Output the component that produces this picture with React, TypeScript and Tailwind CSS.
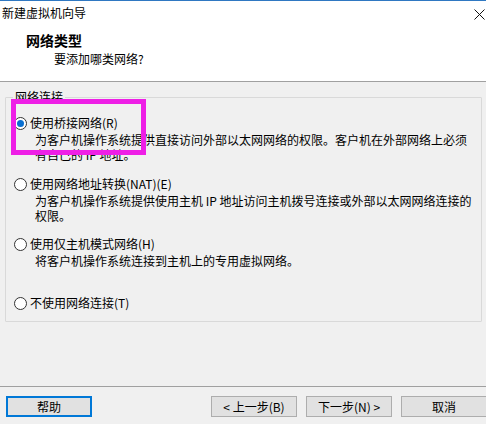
import React from "react";

const font = { fontFamily: '"Noto Sans CJK SC", "Noto Sans", sans-serif' };

function Radio({ checked }: { checked?: boolean }) {
  return (
    <span className="flex h-[13px] w-[13px] shrink-0 items-center justify-center rounded-full border border-[#333333] bg-white">
      {checked && <span className="h-[7px] w-[7px] rounded-full bg-[#0a6fd0]" />}
    </span>
  );
}

function Option({
  label,
  lines,
  checked,
  className,
}: {
  label: string;
  lines?: string[];
  checked?: boolean;
  className?: string;
}) {
  return (
    <div className={className}>
      <div className="flex h-[16px] items-center gap-[3px]">
        <Radio checked={checked} />
        <span className="leading-[16px]">{label}</span>
      </div>
      {lines && (
        <div className="mt-[1px] pl-[21px] leading-[15px]">
          {lines.map((l) => (
            <div key={l} className="h-[15px] whitespace-nowrap">
              {l}
            </div>
          ))}
        </div>
      )}
    </div>
  );
}

function Btn({ children, focused }: { children: React.ReactNode; focused?: boolean }) {
  return (
    <button
      className={
        focused
          ? "flex h-[21px] w-[86px] items-center justify-center border-2 border-[#0078d7] bg-[#e1e1e1] text-[12px] leading-none text-black"
          : "flex h-[21px] w-[86px] items-center justify-center border border-[#adadad] bg-[#e1e1e1] text-[12px] leading-none text-black"
      }
    >
      {children}
    </button>
  );
}

export default function App() {
  return (
    <div
      style={font}
      className="relative flex h-[424px] w-[486px] flex-col overflow-hidden bg-[#f0f0f0] text-[12px] text-black"
    >
      {/* Title bar */}
      <div className="flex h-[30px] shrink-0 items-start justify-between border-t border-[#2f78c2] bg-white">
        <span className="ml-[2px] mt-[4px] leading-[16px]">新建虚拟机向导</span>
        <svg className="mr-[1px] mt-[8px]" width="11" height="11" viewBox="0 0 11 11">
          <path d="M0.5 0.5 L10.5 10.5 M10.5 0.5 L0.5 10.5" stroke="#111" strokeWidth="1" />
        </svg>
      </div>

      {/* Header */}
      <div className="h-[52px] shrink-0 border-b border-[#a0a0a0] bg-white">
        <div className="ml-[26px] mt-[1px] text-[14px] font-bold leading-[18px]">网络类型</div>
        <div className="ml-[54px] mt-[2px] leading-[16px]">要添加哪类网络?</div>
      </div>

      {/* Group box */}
      <div className="relative ml-[5px] mt-[15px] h-[225px] w-[477px] shrink-0 rounded-[1px] border border-[#d9d9d9] pl-[8px] pt-[17px]">
        <span className="absolute -top-[9px] left-[7px] bg-[#f0f0f0] px-[2px] leading-[16px]">网络连接</span>
        <Option
          checked
          label="使用桥接网络(R)"
          lines={[
            "为客户机操作系统提供直接访问外部以太网网络的权限。客户机在外部网络上必须",
            "有自己的 IP 地址。",
          ]}
        />
        <Option
          className="mt-[14px]"
          label="使用网络地址转换(NAT)(E)"
          lines={["为客户机操作系统提供使用主机 IP 地址访问主机拨号连接或外部以太网网络连接的", "权限。"]}
        />
        <Option
          className="mt-[13px]"
          label="使用仅主机模式网络(H)"
          lines={["将客户机操作系统连接到主机上的专用虚拟网络。"]}
        />
        <Option className="mt-[27px]" label="不使用网络连接(T)" />
      </div>

      {/* Footer */}
      <div className="mt-[64px] h-[1px] shrink-0 bg-[#a0a0a0]" />
      <div className="mt-[9px] flex shrink-0 items-center">
        <div className="ml-[6px]">
          <Btn focused>帮助</Btn>
        </div>
        <div className="ml-[119px] flex gap-[9px]">
          <Btn>&lt; 上一步(B)</Btn>
          <Btn>下一步(N) &gt;</Btn>
          <Btn>取消</Btn>
        </div>
      </div>

      {/* Annotation highlight */}
      <div className="pointer-events-none absolute left-[11px] top-[99px] h-[56px] w-[135px] border-[5px] border-[#ee1fe6]" />
    </div>
  );
}
